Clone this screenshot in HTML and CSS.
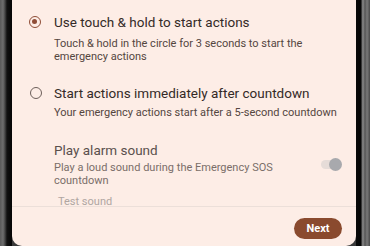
FILE: index.html
```html
<!DOCTYPE html>
<html>
<head>
<meta charset="utf-8">
<link rel="stylesheet" href="styles.css">
</head>
<body>
<div class="phone">
  <div class="bezel-left"></div>
  <div class="screen">
    <div class="content">
      <div class="option">
        <span class="radio checked"></span>
        <div class="text">
          <div class="title">Use touch &amp; hold to start actions</div>
          <div class="sub">Touch &amp; hold in the circle for 3 seconds to start the emergency actions</div>
        </div>
      </div>
      <div class="option second">
        <span class="radio"></span>
        <div class="text">
          <div class="title">Start actions immediately after countdown</div>
          <div class="sub">Your emergency actions start after a 5-second countdown</div>
        </div>
      </div>
      <div class="setting">
        <div class="text">
          <div class="title">Play alarm sound</div>
          <div class="sub">Play a loud sound during the Emergency SOS countdown</div>
        </div>
        <span class="toggle"><span class="thumb"></span></span>
      </div>
      <div class="test">Test sound</div>
    </div>
    <div class="footer">
      <button class="next">Next</button>
    </div>
  </div>
  <div class="bezel-right"></div>
</div>
</body>
</html>
```
FILE: styles.css
```css
html, body {
  margin: 0;
  padding: 0;
  width: 370px;
  height: 246px;
  overflow: hidden;
  background: #3a3a3a;
  font-family: Roboto, "Noto Sans", sans-serif;
}
.phone {
  display: flex;
  width: 370px;
  height: 246px;
}
.bezel-left {
  width: 12px;
  flex: none;
  background: linear-gradient(to right, #5a5a5a 0, #6e6e6e 3px, #444 5px, #111 7px, #050505 12px);
}
.bezel-right {
  width: 14px;
  flex: none;
  background: linear-gradient(to right, #0a0a0a 0, #050505 5px, #6a6a6a 6px, #888 7px, #555 9px, #7a7a7a 11px, #4a4a4a 14px);
}
.screen {
  flex: 1;
  background: #fdede6;
  display: flex;
  flex-direction: column;
  border-bottom-left-radius: 10px;
  border-bottom-right-radius: 10px;
}
.content {
  height: 207px;
  box-sizing: border-box;
  overflow: hidden;
  padding: 13px 0 0 17px;
  border-bottom: 1px solid #ecdfd9;
}
.option {
  display: flex;
  align-items: flex-start;
}
.option.second {
  margin-top: 21px;
}
.option .sub {
  width: 290px;
}
.radio {
  border: 1.5px solid #6d5f5a;
  border-radius: 50%;
  flex: none;
  margin-top: 3px;
  margin-right: 13px;
  box-sizing: border-box;
  width: 12px;
  height: 12px;
  position: relative;
}
.option.second .radio {
  margin-left: 1px;
  margin-right: 12px;
}
.radio.checked {
  border-color: #8f4d37;
}
.radio.checked::after {
  content: "";
  position: absolute;
  left: 2px;
  top: 2px;
  width: 5px;
  height: 5px;
  border-radius: 50%;
  background: #8f4d37;
}
.title {
  font-size: 13.5px;
  color: #342a27;
  line-height: 18px;
}
.sub {
  font-size: 11px;
  color: #54463f;
  line-height: 13px;
  margin-top: 6px;
}
.option.second .sub {
  margin-top: 4px;
}
.setting {
  display: flex;
  align-items: center;
  margin-top: 22px;
  padding-left: 25px;
}
.setting .sub {
  margin-top: 2px;
  color: #7a6e69;
}
.setting .title {
  color: #5a504d;
}
.setting .text {
  flex: 1;
  padding-right: 40px;
}
.toggle {
  width: 19px;
  height: 9px;
  border-radius: 5px;
  background: #e6dcd8;
  position: relative;
  margin-right: 16px;
  flex: none;
}
.thumb {
  position: absolute;
  right: -2px;
  top: -2px;
  width: 13px;
  height: 13px;
  border-radius: 50%;
  background: #a8a9ad;
}
.test {
  font-size: 11px;
  color: #b0a6a2;
  padding-left: 29px;
  margin-top: 8px;
  line-height: 13px;
}
.footer {
  flex: 1;
  display: flex;
  justify-content: flex-end;
  align-items: flex-start;
  padding: 11px 14px 0 0;
}
.next {
  border: none;
  background: #8a4a2e;
  color: #fff;
  font-family: Roboto, sans-serif;
  font-weight: bold;
  font-size: 11px;
  width: 48px;
  height: 21px;
  border-radius: 11px;
  padding: 0;
}
```
